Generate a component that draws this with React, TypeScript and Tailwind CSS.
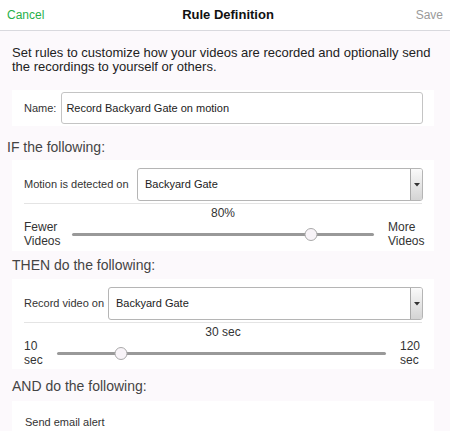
import React from 'react';

function Select({ value }: { value: string }) {
  return (
    <div className="flex-1 h-[33px] flex items-stretch border border-[#b5b5b5] rounded-[3px] bg-white">
      <div className="flex-1 flex items-center pl-[7px] text-[11px] text-[#222]">{value}</div>
      <div className="w-[12px] flex items-center justify-center border-l border-[#a8a8a8] rounded-r-[2px] bg-gradient-to-b from-[#fafafa] to-[#d4d4d4]">
        <svg width="6" height="4" viewBox="0 0 6 4">
          <path d="M0 0 L6 0 L3 3.5 Z" fill="#333" />
        </svg>
      </div>
    </div>
  );
}

function Slider({
  pct,
  left,
  right,
  top,
  leftW,
  rightW,
}: {
  pct: number;
  left: string[];
  right: string[];
  top: string;
  leftW: number;
  rightW: number;
}) {
  return (
    <div className="px-3">
      <div className="text-center text-[12px] leading-[14px] text-[#333] pt-[2px]">{top}</div>
      <div className="flex items-center">
        <div className="text-[12px] leading-[14px] text-[#333] shrink-0" style={{ width: leftW }}>
          {left.map((l) => (
            <div key={l}>{l}</div>
          ))}
        </div>
        <div className="flex-1 relative h-[14px] flex items-center">
          <div className="h-[3px] w-full bg-[#999] rounded" />
          <div
            className="absolute w-[13px] h-[13px] rounded-full bg-[#f8f4f8] border border-[#a9a9a9] -translate-x-1/2"
            style={{ left: `${pct}%` }}
          />
        </div>
        <div className="text-[12px] leading-[14px] text-[#333] shrink-0 pl-[14px]" style={{ width: rightW }}>
          {right.map((r) => (
            <div key={r}>{r}</div>
          ))}
        </div>
      </div>
    </div>
  );
}

export default function App() {
  return (
    <div
      className="w-[450px] h-[431px] overflow-hidden bg-[#fcf9fc] text-[#222]"
      style={{ fontFamily: '"Liberation Sans", Arial, sans-serif' }}
    >
      <div className="h-[31px] bg-white border-b border-[#d9d9de] grid grid-cols-[1fr_auto_1fr] items-center px-[7px] text-[12px]">
        <span className="text-[#27b04a]">Cancel</span>
        <span className="text-[13px] font-bold text-[#111] translate-x-[3px]">Rule Definition</span>
        <span className="text-right text-[#9a9a9a]">Save</span>
      </div>

      <p className="px-3 pt-[15px] text-[13px] leading-[14px] text-[#222]">
        Set rules to customize how your videos are recorded and optionally send the recordings to yourself or others.
      </p>

      <div className="ml-3 mr-4 mt-[16px] bg-white py-[2px] pl-3 pr-[11px] flex items-center gap-[5px]">
        <span className="text-[11px] text-[#333]">Name:</span>
        <div className="flex-1 h-[32px] border border-[#c4c4c4] rounded-[3px] flex items-center pl-[4px] text-[11px] text-[#222]">
          Record Backyard Gate on motion
        </div>
      </div>

      <div className="pl-[7px] mt-[14px] text-[14px] leading-[14px] text-[#444]">IF the following:</div>

      <div className="ml-3 mr-4 mt-[6px] bg-white pt-[8px] pb-[3px]">
        <div className="flex items-center pl-3 pr-[11px]">
          <span className="text-[11px] text-[#333] w-[113px] shrink-0 whitespace-nowrap">Motion is detected on</span>
          <Select value="Backyard Gate" />
        </div>
        <div className="mx-3 mt-[2px] border-t border-[#e4e4e4]" />
        <Slider pct={79} top="80%" left={['Fewer', 'Videos']} right={['More', 'Videos']} leftW={48} rightW={48} />
      </div>

      <div className="pl-3 mt-[7px] text-[14px] leading-[14px] text-[#444]">THEN do the following:</div>

      <div className="ml-3 mr-4 mt-[7px] bg-white pt-[8px] pb-[2px]">
        <div className="flex items-center pl-3 pr-[11px]">
          <span className="text-[11px] text-[#333] w-[84px] shrink-0 whitespace-nowrap">Record video on</span>
          <Select value="Backyard Gate" />
        </div>
        <div className="mx-3 mt-[2px] border-t border-[#e4e4e4]" />
        <Slider pct={19.5} top="30 sec" left={['10', 'sec']} right={['120', 'sec']} leftW={33} rightW={36} />
      </div>

      <div className="pl-3 mt-[10px] text-[14px] leading-[14px] text-[#444]">AND do the following:</div>

      <div className="ml-3 mr-4 mt-[8px] bg-white pt-[13px] pl-[13px] h-[40px] text-[11px] text-[#333]">
        Send email alert
      </div>
    </div>
  );
}
